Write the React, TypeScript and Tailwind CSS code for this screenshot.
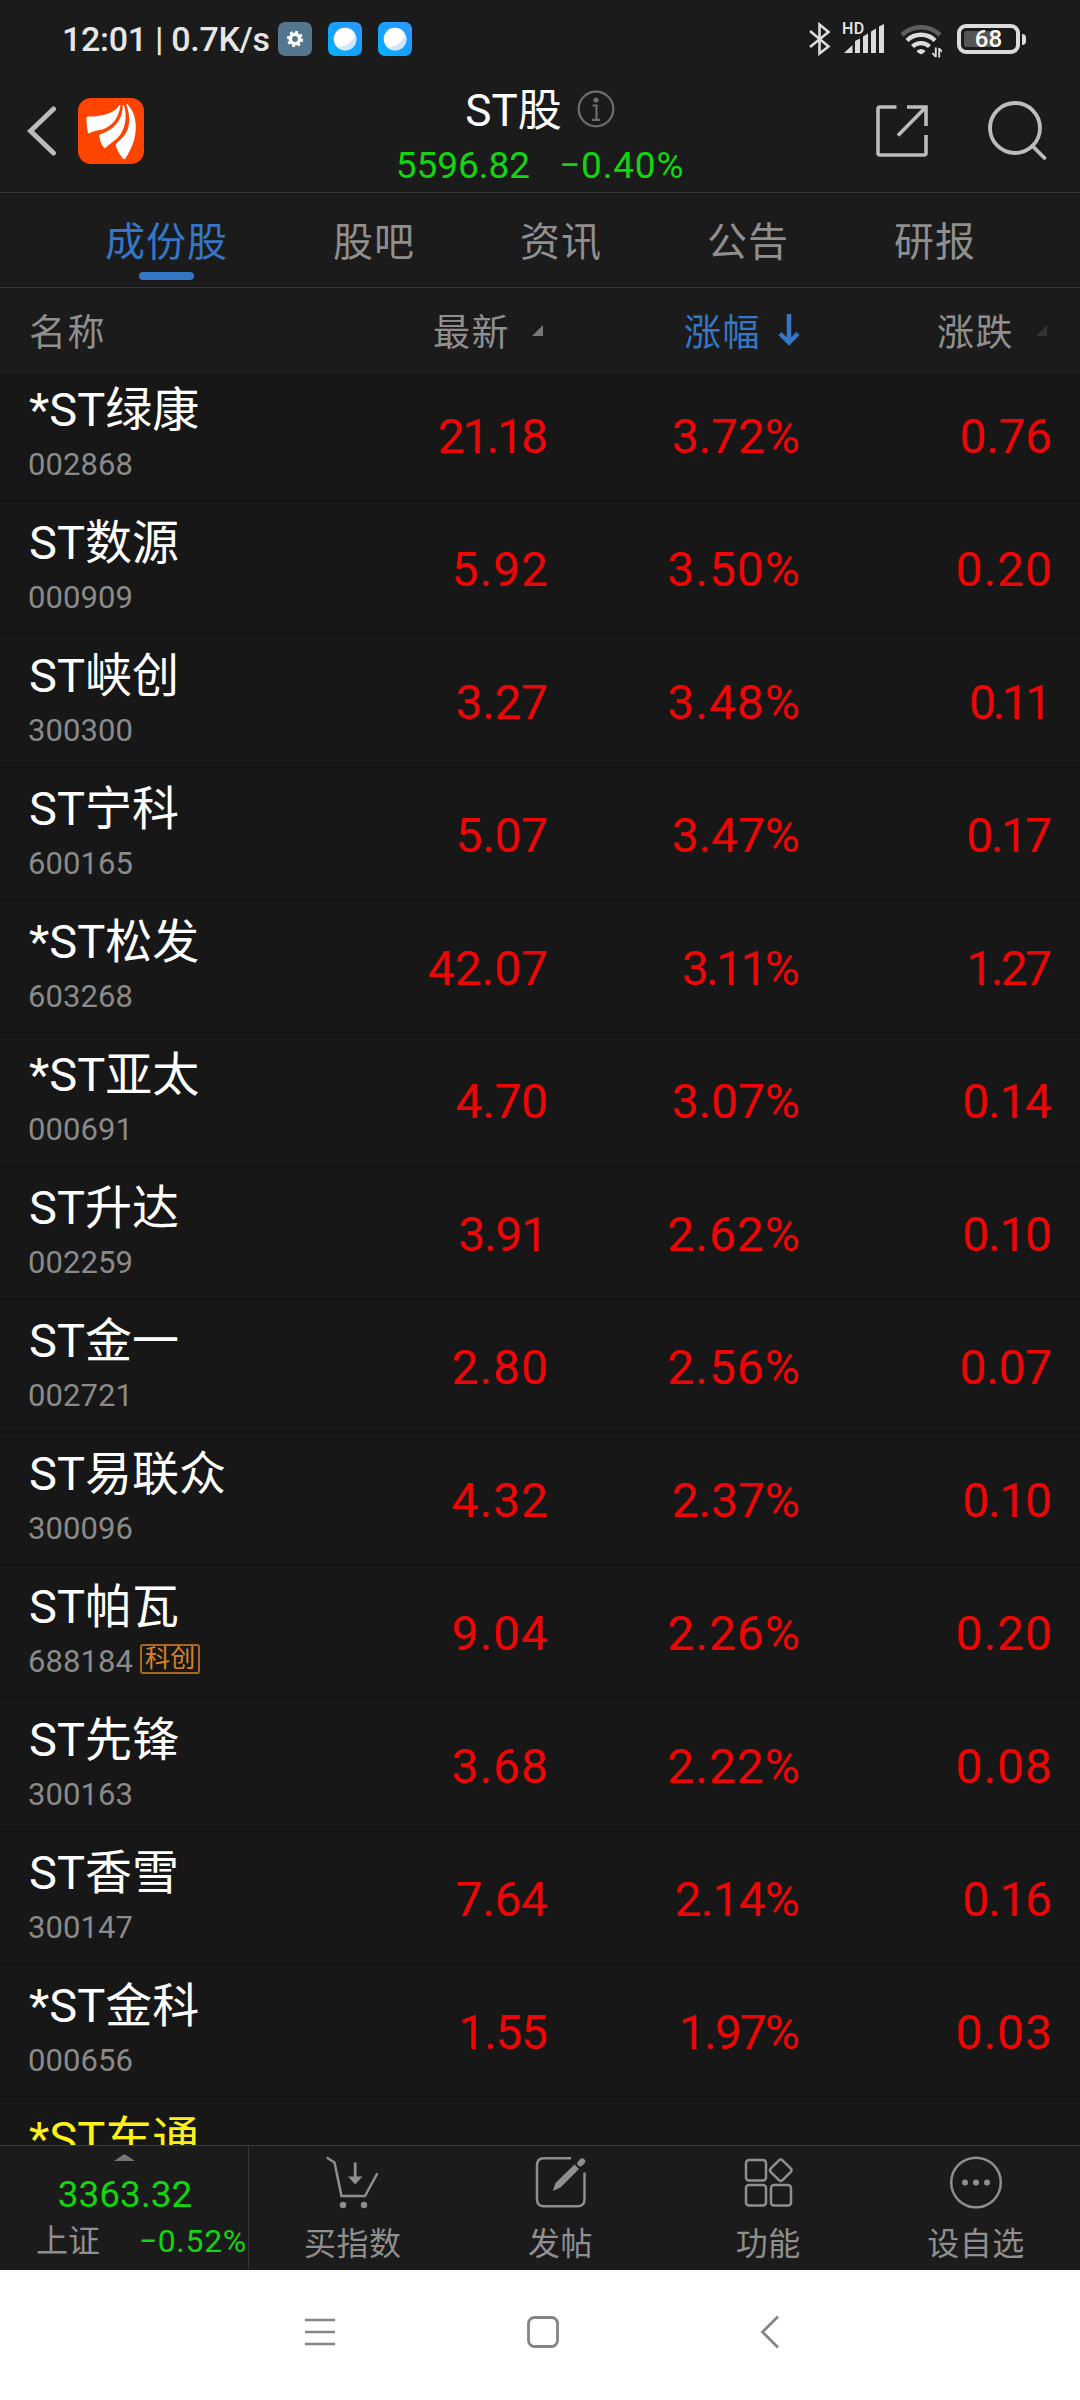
import type { ReactNode } from 'react'
import clsx from 'clsx'

type Stock = {
  name: string
  code: string
  latest: string
  percent: string
  change: string
  tag?: string
  watched?: boolean
}

const stocks: Stock[] = [
  { name: '*ST绿康', code: '002868', latest: '21.18', percent: '3.72%', change: '0.76' },
  { name: 'ST数源', code: '000909', latest: '5.92', percent: '3.50%', change: '0.20' },
  { name: 'ST峡创', code: '300300', latest: '3.27', percent: '3.48%', change: '0.11' },
  { name: 'ST宁科', code: '600165', latest: '5.07', percent: '3.47%', change: '0.17' },
  { name: '*ST松发', code: '603268', latest: '42.07', percent: '3.11%', change: '1.27' },
  { name: '*ST亚太', code: '000691', latest: '4.70', percent: '3.07%', change: '0.14' },
  { name: 'ST升达', code: '002259', latest: '3.91', percent: '2.62%', change: '0.10' },
  { name: 'ST金一', code: '002721', latest: '2.80', percent: '2.56%', change: '0.07' },
  { name: 'ST易联众', code: '300096', latest: '4.32', percent: '2.37%', change: '0.10' },
  { name: 'ST帕瓦', code: '688184', latest: '9.04', percent: '2.26%', change: '0.20', tag: '科创' },
  { name: 'ST先锋', code: '300163', latest: '3.68', percent: '2.22%', change: '0.08' },
  { name: 'ST香雪', code: '300147', latest: '7.64', percent: '2.14%', change: '0.16' },
  { name: '*ST金科', code: '000656', latest: '1.55', percent: '1.97%', change: '0.03' },
  { name: '*ST车通', code: '', latest: '', percent: '', change: '', watched: true },
]

const tabs = ['成份股', '股吧', '资讯', '公告', '研报']

const count = (value: string, digit: string) => value.split(digit).length - 1

// Tabular digits leave too much air around 1 and 7, so tighten strings that contain them
function Price({ value }: { value: string }) {
  const slack = count(value, '1') * 9 + count(value, '7') * 5.5
  const spacing = value ? 1 - slack / value.length : 0
  return (
    <div className="pt-1" style={{ letterSpacing: `${spacing}px`, marginRight: `${-spacing}px` }}>
      {value}
    </div>
  )
}

function BrowserIcon() {
  return (
    <svg className="size-[34px]" viewBox="0 0 34 34">
      <defs>
        <linearGradient id="browser" x1="0" y1="1" x2="1" y2="0">
          <stop offset="0" stopColor="#00b4ff" />
          <stop offset="0.5" stopColor="#18a0ff" />
          <stop offset="1" stopColor="#2f96ff" />
        </linearGradient>
      </defs>
      <rect width="34" height="34" rx="7" fill="url(#browser)" />
      <circle cx="17" cy="17" r="11.3" fill="#fff" />
      <path d="M27.6 13a11.3 11.3 0 0 1-18 12.6C17 25 24 20 27.6 13Z" fill="#d3e7fb" />
    </svg>
  )
}

function StatusBar() {
  return (
    <div className="flex h-20 items-start justify-between pt-[22px] pr-[54px] pl-[62px] text-[#e6e6e6]">
      <div className="flex h-[34px] items-center">
        <span className="w-[216px] text-[34px] leading-[34px] font-medium whitespace-nowrap tracking-[-0.3px]">
          12:01 | 0.7K/s
        </span>
        <div className="flex gap-4">
          <svg className="size-[34px]" viewBox="0 0 34 34">
            <rect width="34" height="34" rx="7" fill="#54768f" />
            <circle cx="17" cy="17" r="4.7" fill="none" stroke="#fff" strokeWidth="3.6" />
            <circle cx="17" cy="17" r="7" fill="none" stroke="#fff" strokeWidth="2.4" strokeDasharray="2.75 2.75" />
          </svg>
          <BrowserIcon />
          <BrowserIcon />
        </div>
      </div>

      <div className="flex h-[35px] items-start">
        <svg className="mr-px h-[34px] w-[22px]" viewBox="0 0 22 34" fill="none" stroke="#dcdcdc" strokeWidth="2.6">
          <path d="M1 9 19.500 24.500 10.500 31.500V2.500l9 7.500L1 25" />
        </svg>
        <div className="relative mr-px ml-[11px]">
          <svg className="h-[34px] w-[42px]" viewBox="0 0 42 34" fill="#dcdcdc">
            <path d="M1 31 9.500 23v8ZM12 19 17 16.500V31h-5ZM20 14.500l5-3V31h-5ZM28 9.500l5-3V31h-5ZM36 4.500l5-2.500v29h-5Z" />
          </svg>
          <span className="absolute top-[-2px] left-[-1px] text-[16px] leading-[18px] font-medium tracking-[0.5px]">
            HD
          </span>
        </div>
        <svg className="ml-[14px] h-[36px] w-[42px]" viewBox="0 0 42 36" fill="none" stroke="#dcdcdc">
          <path d="M2 13a27 27 0 0 1 38 0" stroke="#5f5f5f" strokeWidth="4.6" />
          <path d="M7 18.500a20 20 0 0 1 28 0M12.500 24.500a12.500 12.500 0 0 1 17 0" strokeWidth="4.400" />
          <path d="M17 28.500a6.500 6.500 0 0 1 8 0v1.500L21 32.500 17 30Z" fill="#dcdcdc" stroke="none" />
          <path d="M35.800 25.500V35M39.200 35.500V26M32.500 31l3.300 4M42.200 30l-3-3.500" strokeWidth="1.900" />
        </svg>
        <div className="mt-[2px] ml-[15px] flex items-center gap-[2px]">
          <div className="relative flex h-[30px] w-[63px] items-center justify-center rounded-[9px] border-4 border-[#dcdcdc]">
            <div className="absolute top-[3px] left-[3px] h-4 w-[33px] rounded-[2px] bg-[#555]" />
            <span className="relative text-[24px] leading-6 font-medium text-white">68</span>
          </div>
          <div className="h-[11px] w-1 rounded-r-sm bg-[#dcdcdc]" />
        </div>
      </div>
    </div>
  )
}

function TitleBar() {
  return (
    <header className="grid h-[113px] grid-cols-[1fr_auto_1fr] border-b border-[#363636]">
      <div className="flex h-[102px] items-center pl-[27px]">
        <svg className="h-[50px] w-[30px]" viewBox="0 0 30 50" fill="none" stroke="#bcbcbc" strokeWidth="5" strokeLinecap="round">
          <path d="M26.500 3 3.500 25l23 22" />
        </svg>
        <svg className="mb-px ml-[21px] size-[66px]" viewBox="0 0 66 66">
          <rect width="66" height="66" rx="13" fill="#ff4400" />
          <g fill="#fff">
            <path d="M8.500 20c0-1 1-1.500 2-1.500C22 18.500 36 16 41 7.500c.5-1 1.500-.5 1.300.5C41 18 36 26 28 30c-6 3-12 2-16 5-1 .8-2 .3-2.200-.7C9 30 8.500 25 8.500 20Z" />
            <path d="M44.800 7.500c-.3 14-8 24-21.800 28.500-1.500.5-2 1-1.700 2.500.7 4 2 7.500 4 10.500.8 1.200 2 1.200 3 .3C33 44.500 39 42 43 35.500 48 27 49 16 46 7.500c-.3-1-1.200-1-1.200 0Z" />
            <path d="M48.500 7c3.500 10 4 20-.5 28-3 5-7 7.500-9.500 10.500-.8 1-.9 2-.5 3 1.500 4.500 4 8.500 7 12 .7.800 1.700.8 2.300 0C53.500 51 57.800 41 57.800 29 57.800 20 55 12 49.500 6.300c-.6-.6-1.300-.2-1 .7Z" />
          </g>
        </svg>
      </div>

      <div className="flex flex-col items-center">
        <div className="mt-[6px] flex h-12 items-center gap-[15px]">
          <h1 className="pt-[2px] text-[44px] leading-[48px] text-white">ST股</h1>
          <svg className="mb-[2px] size-[38px]" viewBox="0 0 38 38" fill="none" stroke="#6e6e6e" strokeWidth="2.200">
            <circle cx="19" cy="19" r="17.300" />
            <path d="M15.500 15.500h4v14M15 29.800h8" />
            <circle cx="19" cy="10" r="2.600" fill="#6e6e6e" stroke="none" />
          </svg>
        </div>
        <div className="mt-3 flex gap-[29px] text-[37px] leading-[40px] text-[#12d512]">
          <span>5596.82</span>
          <span className="tracking-[0.8px]">−0.40%</span>
        </div>
      </div>

      <div className="flex h-[102px] items-center justify-end pr-[33px]">
        <svg className="size-[54px]" viewBox="0 0 54 54" fill="none" stroke="#bcbcbc" strokeWidth="3.600">
          <path d="M21.500 3H5Q3 3 3 5v44q0 2 2 2h44q2 0 2-2V31" />
          <path d="M32 3h19v19M51 3 23 31.500" />
        </svg>
        <svg className="ml-[58px] size-[60px]" viewBox="0 0 60 60" fill="none" stroke="#bcbcbc" strokeWidth="3.800" strokeLinecap="round">
          <circle cx="28" cy="27" r="25" />
          <path d="M45.500 45 57.500 57" />
        </svg>
      </div>
    </header>
  )
}

function Tabs() {
  return (
    <nav className="flex h-[95px] justify-evenly border-b border-[#363636] text-[40px] leading-[58px] tracking-[1px] text-[#8f8f8f]">
      {tabs.map((tab, i) => (
        <div key={tab} className={clsx('flex flex-col items-center pt-[21px] pl-px', i === 0 && 'text-[#3377c6]')}>
          <span>{tab}</span>
          {i === 0 && <div className="h-2 w-[55px] rounded-full bg-[#3377c6]" />}
        </div>
      ))}
    </nav>
  )
}

function SortCorner({ className }: { className?: string }) {
  return (
    <svg className={clsx('size-[11px]', className)} viewBox="0 0 11 11" fill="currentColor">
      <path d="M11 0v11H0Z" />
    </svg>
  )
}

function TableHead() {
  return (
    <div className="flex h-[86px] items-center border-b-2 border-[#191919] text-[37px] leading-[56px] tracking-[1.5px] text-[#8f8f8f]">
      <div className="w-[300px] pt-[8px] pl-[29px]">名称</div>
      <div className="flex w-[243px] items-center justify-end">
        <span className="pt-[8px]">最新</span>
        <SortCorner className="ml-[22px] text-[#777]" />
      </div>
      <div className="flex w-[257px] items-center justify-end text-[#3377c6]">
        <span className="pt-[8px]">涨幅</span>
        <svg className="ml-[17px] h-8 w-[22px]" viewBox="0 0 22 32" fill="none" stroke="currentColor" strokeWidth="4.500">
          <path d="M11 0v29M2 19.500l9 9 9-9" />
        </svg>
      </div>
      <div className="flex w-[247px] items-center justify-end">
        <span className="pt-[8px]">涨跌</span>
        <SortCorner className="ml-[22px] text-[#333]" />
      </div>
    </div>
  )
}

function StockRow({ stock }: { stock: Stock }) {
  return (
    <div className="flex h-[133px] shrink-0 items-center border-b-2 border-[#121212] text-[48px] text-[#ee0606]">
      <div className="flex h-full w-[300px] flex-col pl-7">
        <div
          className={clsx(
            'mt-[11px] pl-px text-[47px] leading-[60px] whitespace-nowrap',
            stock.watched ? 'text-[#fdf01c]' : 'text-white',
          )}
        >
          {stock.name}
        </div>
        <div className="mt-[5px] flex h-10 items-center text-[31px] leading-10 tracking-[0.1px] text-[#8a8a8a]">
          {stock.code}
          {stock.tag && (
            <span className="mb-[7px] ml-[7px] flex h-[30px] w-[60px] items-center justify-center rounded-[3px] border-2 border-[#a8691f] text-[25px] leading-none text-[#d98324]">
              {stock.tag}
            </span>
          )}
        </div>
      </div>
      <div className="w-[248px] text-right">
        <Price value={stock.latest} />
      </div>
      <div className="w-[252px] text-right">
        <Price value={stock.percent} />
      </div>
      <div className="w-[252px] text-right">
        <Price value={stock.change} />
      </div>
    </div>
  )
}

function NavItem({ label, children }: { label: string; children: ReactNode }) {
  return (
    <div className="flex flex-1 flex-col items-center pt-[9px]">
      <svg className="size-[56px]" viewBox="0 0 56 56" fill="none" stroke="#8f8f8f" strokeWidth="2.5">
        {children}
      </svg>
      <span className="mt-[10px] text-[32px] leading-[46px] tracking-[0.5px]">{label}</span>
    </div>
  )
}

function BottomBar() {
  return (
    <footer className="flex h-[125px] border-t border-[#3a3a3a] bg-[#1b1b1b] text-[#8f8f8f]">
      <div className="flex w-[249px] flex-col items-center border-r border-[#363636]">
        <svg className="mt-2 h-[7px] w-[21px]" viewBox="0 0 21 7" fill="#777">
          <path d="M10.500 0 21 7H0Z" />
        </svg>
        <div className="mt-[14px] pl-[2px] text-[37px] leading-[40px] text-[#12d512]">3363.32</div>
        <div className="mt-1 flex w-full items-center justify-between pr-px pl-9 text-[32px] leading-[44px]">
          <span>上证</span>
          <span className="tracking-[0.7px] text-[#12d512]">−0.52%</span>
        </div>
      </div>
      <NavItem label="买指数">
        <path d="M2.500 3 9.500 7.500 16.500 41H40L52 19" strokeLinecap="round" />
        <path d="M30.200 7.500v16" strokeWidth="2.800" />
        <path d="M23 21.500h14.500l-7.300 8Z" fill="#8f8f8f" stroke="none" />
        <circle cx="18" cy="50" r="3.200" fill="#8f8f8f" stroke="none" />
        <circle cx="39" cy="50" r="3.200" fill="#8f8f8f" stroke="none" />
      </NavItem>
      <NavItem label="发帖">
        <path d="M38 3.300H11Q4 3.300 4 10.300v34q0 7 7 7h33.500q7 0 7-7V17.500" />
        <path d="m41.500 9.500 4.500 4.500-18.500 18.500L19.800 36 22.500 28Z" fill="#8f8f8f" stroke="none" />
        <path d="m47.300 8.300 1.900-1.900" strokeWidth="6" strokeLinecap="round" />
      </NavItem>
      <NavItem label="功能">
        <rect x="6" y="5" width="20" height="20.500" rx="3" />
        <rect x="6" y="30" width="20" height="20.500" rx="3" />
        <rect x="31" y="30" width="20" height="20.500" rx="3" />
        <rect x="32.500" y="7" width="16.500" height="16.500" rx="2.500" transform="rotate(45 40.750 15.250)" />
      </NavItem>
      <NavItem label="设自选">
        <circle cx="28" cy="27.500" r="24.800" />
        <g fill="#8f8f8f" stroke="none">
          <circle cx="17" cy="27.500" r="3" />
          <circle cx="28" cy="27.500" r="3" />
          <circle cx="39" cy="27.500" r="3" />
        </g>
      </NavItem>
    </footer>
  )
}

function SystemNav() {
  return (
    <div className="flex h-[130px] items-start bg-white pt-[45px] pl-[304px]">
      <svg className="h-[34px] w-8" viewBox="0 0 32 34" stroke="#858585" strokeWidth="2.600">
        <path d="M1 5h30M1 17h30M1 29h30" />
      </svg>
      <svg className="ml-[190px] size-[34px]" viewBox="0 0 34 34" fill="none" stroke="#858585" strokeWidth="2.800">
        <rect x="2.500" y="2.500" width="29" height="29" rx="6" />
      </svg>
      <svg className="ml-[200px] h-[34px] w-5" viewBox="0 0 20 34" fill="none" stroke="#858585" strokeWidth="2.800">
        <path d="M18 1.500 2.500 17 18 32.500" />
      </svg>
    </div>
  )
}

export default function App() {
  return (
    <div className="flex h-[2400px] w-[1080px] flex-col overflow-hidden bg-[#1b1b1b] font-[Roboto,'Noto_Sans_CJK_SC',sans-serif]">
      <StatusBar />
      <TitleBar />
      <Tabs />
      <TableHead />
      <main className="min-h-0 flex-1 overflow-hidden bg-[#171717]">
        <div className="-mt-[5px] flex flex-col">
          {stocks.map((stock) => (
            <StockRow key={stock.name} stock={stock} />
          ))}
        </div>
      </main>
      <BottomBar />
      <SystemNav />
    </div>
  )
}
